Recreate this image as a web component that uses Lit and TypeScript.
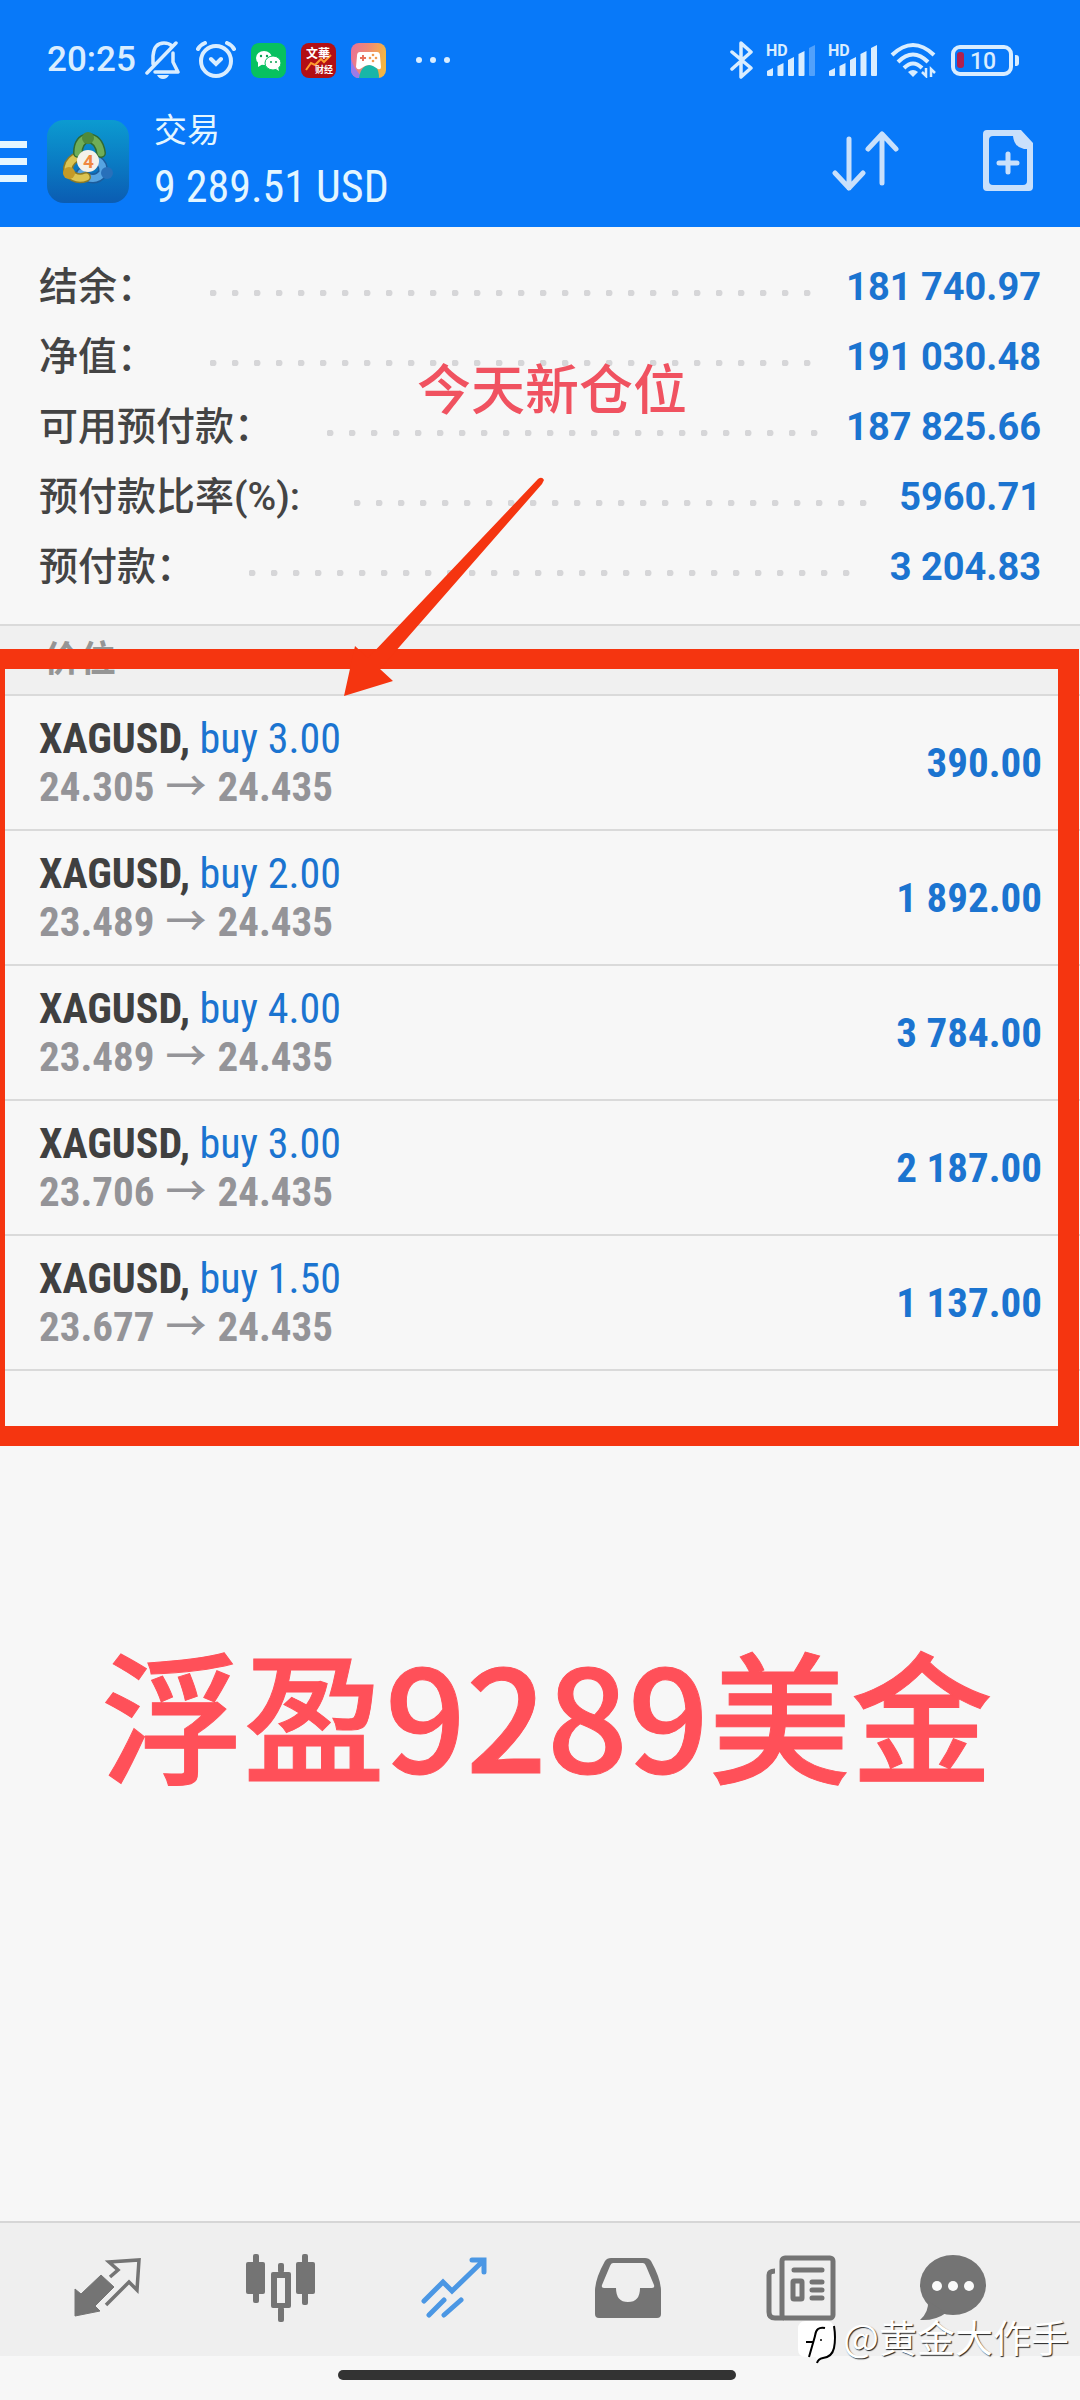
import { LitElement, html, css, svg, nothing } from 'lit';
import { customElement, property } from 'lit/decorators.js';

interface SummaryRow {
  label: string;
  value: string;
}

interface Position {
  symbol: string;
  side: string;
  open: string;
  current: string;
  profit: string;
}

const summary: SummaryRow[] = [
  { label: '结余：', value: '181 740.97' },
  { label: '净值：', value: '191 030.48' },
  { label: '可用预付款：', value: '187 825.66' },
  { label: '预付款比率(%):', value: '5960.71' },
  { label: '预付款：', value: '3 204.83' },
];

const positions: Position[] = [
  { symbol: 'XAGUSD', side: 'buy 3.00', open: '24.305', current: '24.435', profit: '390.00' },
  { symbol: 'XAGUSD', side: 'buy 2.00', open: '23.489', current: '24.435', profit: '1 892.00' },
  { symbol: 'XAGUSD', side: 'buy 4.00', open: '23.489', current: '24.435', profit: '3 784.00' },
  { symbol: 'XAGUSD', side: 'buy 3.00', open: '23.706', current: '24.435', profit: '2 187.00' },
  { symbol: 'XAGUSD', side: 'buy 1.50', open: '23.677', current: '24.435', profit: '1 137.00' },
];

const tabs = [
  {
    name: '行情',
    icon: html`<svg width="68" height="60" viewBox="0 0 68 60">
      <path d="M1 31 7 36 27 17 40 29 21 48 26 53 1 58z" fill="currentColor" stroke="currentColor" stroke-linejoin="round" />
      <path d="M36 19 44 12 35 4 65 2 63 32 55 24 32 47" fill="none" stroke="currentColor" stroke-width="3.5" />
    </svg>`,
  },
  {
    name: '图表',
    icon: html`<svg width="70" height="68" viewBox="0 0 70 68" fill="currentColor">
      <rect y="8" width="19" height="32" rx="2" />
      <rect x="7" width="6" height="49" rx="2" />
      <path fill-rule="evenodd" d="M27 18h16q2 0 2 2v32q0 2-2 2H27q-2 0-2-2V20q0-2 2-2zm4 6v25h8V24z" />
      <rect x="32" y="9" width="6" height="10" rx="2" />
      <rect x="32" y="53" width="6" height="15" rx="2" />
      <rect x="50" y="8" width="19" height="32" rx="2" />
      <rect x="56" width="6" height="51" rx="2" />
    </svg>`,
  },
  {
    name: '交易',
    active: true,
    icon: html`<svg width="67" height="61" viewBox="0 0 67 61" fill="none" stroke="currentColor" stroke-width="5" stroke-linecap="round">
      <path d="M3 44 22 25 31 34 62 4M51 3h12v12M8 58 23 43M23 58 40 43" />
    </svg>`,
  },
  {
    name: '历史',
    icon: html`<svg width="66" height="60" viewBox="0 0 66 60">
      <path
        fill="currentColor"
        fill-rule="evenodd"
        d="M10 3q2-3 6-3h34q4 0 6 3 10 18 10 30v23q0 4-4 4H4q-4 0-4-4V33Q0 21 10 3zM18 5q-2 0-3 3L7 27q-1 3 2 3h12q0 14 12 14t12-14h12q3 0 2-3L51 8q-1-3-3-3z"
      />
    </svg>`,
  },
  {
    name: '新闻',
    icon: html`<svg width="70" height="66" viewBox="0 0 70 66" fill="none" stroke="currentColor" stroke-width="5">
      <rect x="16" y="3" width="51" height="60" rx="3" />
      <path d="M9 16Q3 16 3 20V57Q3 63 9 63H18" />
      <path d="M28 15H56M46 27H56M46 35H56M46 43H56" stroke-linecap="round" />
      <rect x="27" y="26" width="9" height="18" rx="1" />
    </svg>`,
  },
  {
    name: '消息',
    icon: html`<svg width="66" height="66" viewBox="0 0 66 66">
      <ellipse cx="33" cy="30" rx="33" ry="30" fill="currentColor" />
      <path d="M8 46Q9 57 0 65 15 66 26 58z" fill="currentColor" />
      <g fill="#fafafa"><circle cx="17" cy="31" r="5" /><circle cx="33" cy="31" r="5" /><circle cx="49" cy="31" r="5" /></g>
    </svg>`,
  },
];

@customElement('signal-bars')
export class SignalBars extends LitElement {
  @property({ type: Number }) level = 5;

  static styles = css`
    :host {
      display: block;
    }

    svg {
      display: block;
    }

    text {
      font: 700 16px Roboto, sans-serif;
    }
  `;

  render() {
    const tops = [25, 20, 14, 8, 2];
    return html`
      <svg width="50" height="42" viewBox="0 -4 50 42" fill="#d9edff">
        <text x="0" y="13">HD</text>
        ${tops.map(
          (y, i) => svg`<path
            opacity=${i < this.level ? 1 : 0.35}
            d="M${1 + i * 10.5} ${y + 3}l6-3V32q0 1-1 1h-4q-1 0-1-1z"
          />`
        )}
      </svg>
    `;
  }
}

@customElement('status-bar')
export class StatusBar extends LitElement {
  static styles = css`
    :host {
      display: flex;
      align-items: center;
      justify-content: space-between;
      height: 40px;
      padding: 40px 60px 0 47px;
      color: #d9edff;
      font-family: Roboto, 'Noto Sans CJK SC', sans-serif;
    }

    .group {
      display: flex;
      align-items: center;
    }

    .left {
      gap: 15px;
    }

    .right {
      gap: 12px;
    }

    .clock {
      display: flex;
      align-items: center;
      gap: 9px;
      font-size: 35px;
      font-weight: 500;
      line-height: 40px;
    }

    .more {
      margin-left: 14px;
    }

    svg {
      display: block;
    }

    .tiny {
      font: 700 12px 'Noto Sans CJK SC', sans-serif;
    }

    .tiny.small {
      font-size: 9px;
    }

    .charge {
      font: 500 23px Roboto, sans-serif;
    }
  `;

  render() {
    return html`
      <div class="group left">
        <div class="clock">
          <span>20:25</span>
          <svg width="36" height="38" viewBox="0 0 36 38" fill="none" stroke="currentColor" stroke-width="3.5">
            <path d="M8 23V15Q9 2 19 2q5 0 8 3M2 32 31 2M28 12v9l5 10H10" stroke-linecap="round" stroke-linejoin="round" />
            <path d="M12 34h12q-2 4-6 4t-6-4z" fill="currentColor" stroke="none" />
          </svg>
        </div>
        <svg width="40" height="38" viewBox="0 0 40 38" fill="none" stroke="currentColor" stroke-width="4" stroke-linecap="round">
          <circle cx="20" cy="20" r="15" />
          <path d="M15 18l5 5 5-5M2 8q2-4 7-6M38 8q-2-4-7-6" />
        </svg>
        <svg width="35" height="35" viewBox="0 0 35 35">
          <rect width="35" height="35" rx="8" fill="#07c160" />
          <ellipse cx="13" cy="15" rx="8" ry="7" fill="#fff" />
          <path d="M7 19 7 24l5-3z" fill="#fff" />
          <ellipse cx="22" cy="20" rx="8" ry="7" fill="#fff" stroke="#07c160" />
          <path d="M25 26l3 2-1-4z" fill="#fff" />
          <g fill="#07a050"><circle cx="10" cy="13" r="1.2" /><circle cx="16" cy="13" r="1.2" /><circle cx="20" cy="19" r="1" /><circle cx="25" cy="19" r="1" /></g>
        </svg>
        <svg width="35" height="35" viewBox="0 0 35 35">
          <rect width="35" height="35" rx="8" fill="#b30f14" />
          <path d="M5 27l5-7 4 2 6-6 3 3 7-7" fill="none" stroke="#ff9a2e" stroke-width="2" />
          <text class="tiny" x="5" y="15" fill="#fff">文華</text>
          <text class="tiny small" x="14" y="30" fill="#fff">财经</text>
        </svg>
        <svg width="35" height="35" viewBox="0 0 35 35">
          <defs>
            <linearGradient id="game" x1="0" y1="0" x2="1" y2="0.2">
              <stop offset="0" stop-color="#e8709a" />
              <stop offset="0.5" stop-color="#ee8a74" />
              <stop offset="1" stop-color="#f3b544" />
            </linearGradient>
            <clipPath id="game-clip"><rect width="35" height="35" rx="8" /></clipPath>
          </defs>
          <g clip-path="url(#game-clip)">
            <rect width="35" height="35" fill="url(#game)" />
            <path d="M0 16q3 10 12 19H0z" fill="#9b7be8" />
            <path d="M8 35q2-13 11-13t9 13z" fill="#18b6a8" />
          </g>
          <path d="M9 9h17q3 0 3 4l1 11q0 3-3 2l-5-3q-4-2-8 0l-5 3q-3 1-4-2l1-11q0-4 3-4z" fill="#fff" />
          <path d="M12 12v6M9 15h6" stroke="#e8705c" stroke-width="2" />
          <g fill="#f09a50"><circle cx="22" cy="12" r="1.3" /><circle cx="22" cy="18" r="1.3" /><circle cx="19" cy="15" r="1.3" /><circle cx="25" cy="15" r="1.3" /></g>
        </svg>
        <svg class="more" width="36" height="8" viewBox="0 0 36 8" fill="currentColor">
          <circle cx="4" cy="4" r="3" /><circle cx="18" cy="4" r="3" /><circle cx="32" cy="4" r="3" />
        </svg>
      </div>
      <div class="group right">
        <svg width="24" height="38" viewBox="0 0 24 38" fill="none" stroke="currentColor" stroke-width="3.5" stroke-linejoin="round" stroke-linecap="round">
          <path d="M2 11 21 27 11 36V2L21 11 2 28" />
        </svg>
        <signal-bars level="4"></signal-bars>
        <signal-bars></signal-bars>
        <svg width="49" height="36" viewBox="0 0 49 36" fill="none" stroke="currentColor" stroke-width="4">
          <path d="M2 13q21-20 42 0M8 20q15-15 30 0M14 26q9-9 18 0" />
          <path d="M18 30q5-4 10 0l-5 5z" fill="currentColor" stroke="none" />
          <path d="M36 26v8l-4-4M41 35v-8l4 4" stroke-width="2.5" />
        </svg>
        <svg width="69" height="31" viewBox="0 0 69 31" fill="none">
          <rect x="2" y="2" width="58" height="27" rx="7" stroke="currentColor" stroke-width="4" />
          <rect x="6" y="7" width="7" height="16" rx="3" fill="#b02050" />
          <text class="charge" x="19" y="24" fill="currentColor">10</text>
          <path d="M64 10h1q3 0 3 3v5q0 3-3 3h-1z" fill="currentColor" />
        </svg>
      </div>
    `;
  }
}

@customElement('trade-header')
export class TradeHeader extends LitElement {
  static styles = css`
    :host {
      display: flex;
      align-items: center;
      height: 131px;
      padding: 16px 47px 0 0;
      color: #e4f6ff;
      font-family: Roboto, 'Noto Sans CJK SC', sans-serif;
    }

    button {
      display: block;
      padding: 0;
      border: 0;
      background: none;
      color: inherit;
    }

    svg {
      display: block;
    }

    .logo {
      margin: 0 25px 0 20px;
    }

    .titles {
      flex: 1;
      padding-bottom: 2px;
    }

    h1,
    p {
      margin: 0;
      font-weight: 400;
    }

    h1 {
      font-size: 33px;
      line-height: 52px;
    }

    p {
      font-family: 'Roboto Condensed', Roboto, sans-serif;
      font-size: 44px;
      line-height: 60px;
    }

    .actions {
      display: flex;
      align-items: center;
      gap: 84px;
      padding-bottom: 2px;
      color: #c9e0fb;
    }

    .four {
      font: 700 19px Roboto, sans-serif;
    }
  `;

  render() {
    return html`
      <button aria-label="菜单">
        <svg width="27" height="41" viewBox="0 0 27 41" fill="currentColor">
          <rect width="27" height="7" /><rect y="17" width="27" height="7" /><rect y="34" width="27" height="7" />
        </svg>
      </button>
      <svg class="logo" width="82" height="83" viewBox="0 0 82 83">
        <defs>
          <linearGradient id="tile" x1="0" y1="0" x2="0" y2="1">
            <stop offset="0" stop-color="#0c9bd0" />
            <stop offset="0.5" stop-color="#0a7cc4" />
            <stop offset="1" stop-color="#0b5cb2" />
          </linearGradient>
        </defs>
        <rect width="82" height="83" rx="17" fill="url(#tile)" />
        <g fill="none" stroke-linecap="round">
          <path d="M50 40q7 4 6 13-9 11-22 0" stroke="#1c5c9c" stroke-width="10" />
          <path d="M50 40q7 4 6 13-9 11-22 0" stroke="#56a4e2" stroke-width="7" />
          <path d="M28 38q-8 5-7 14 8 9 18 5" stroke="#8a7a28" stroke-width="10" />
          <path d="M28 38q-8 5-7 14 8 9 18 5" stroke="#dcc452" stroke-width="7" />
          <path d="M31 33q0-13 10-15 11 1 13 15" stroke="#2f6a34" stroke-width="10" />
          <path d="M31 33q0-13 10-15 11 1 13 15" stroke="#6fae58" stroke-width="7" />
        </g>
        <circle cx="41" cy="18" r="6" fill="#4f8a3c" />
        <circle cx="22" cy="53" r="6" fill="#c49a28" />
        <circle cx="60" cy="53" r="6" fill="#2870ba" />
        <circle cx="41" cy="41" r="11" fill="#f4f1ea" />
        <text class="four" x="36" y="48" fill="#ef8741">4</text>
      </svg>
      <div class="titles">
        <h1>交易</h1>
        <p>9 289.51 USD</p>
      </div>
      <div class="actions">
        <button aria-label="排序">
          <svg width="67" height="60" viewBox="0 0 67 60" fill="none" stroke="currentColor" stroke-width="5" stroke-linecap="round" stroke-linejoin="round">
            <path d="M17 8V57M3 42 17 57 31 42M50 52V3M36 18 50 3 64 18" />
          </svg>
        </button>
        <button aria-label="新订单">
          <svg width="50" height="61" viewBox="0 0 50 61">
            <path
              fill="currentColor"
              fill-rule="evenodd"
              d="M4 0H38L50 13V57q0 4-4 4H4q-4 0-4-4V4Q0 0 4 0zM10 6q-4 0-4 4V51q0 4 4 4H40q4 0 4-4V19H41Q31 17 30 6z"
            />
            <path d="M25 24V42M16 33H34" stroke="currentColor" stroke-width="5" stroke-linecap="round" />
          </svg>
        </button>
      </div>
    `;
  }
}

@customElement('account-summary')
export class AccountSummary extends LitElement {
  static styles = css`
    :host {
      display: block;
      padding: 25px 39px 22px 39px;
      font-family: Roboto, 'Noto Sans CJK SC', sans-serif;
      font-size: 39px;
      font-weight: 500;
      line-height: 70px;
    }

    dl {
      margin: 0;
    }

    .row {
      display: flex;
      height: 70px;
    }

    dt {
      color: #444;
    }

    dd {
      margin: 0;
      color: #1b74d0;
      font-size: 38px;
      font-weight: 700;
    }

    .dots {
      flex: 1;
      height: 6px;
      margin: 38px 27px 0 54px;
      background: radial-gradient(circle at 3px 3px, #d6d6d8 3px, transparent 4px) 0 0 / 22px 6px repeat-x;
    }
  `;

  render() {
    return html`
      <dl>
        ${summary.map(
          (row) => html`
            <div class="row">
              <dt>${row.label}</dt>
              <span class="dots"></span>
              <dd>${row.value}</dd>
            </div>
          `
        )}
      </dl>
    `;
  }
}

@customElement('position-list')
export class PositionList extends LitElement {
  static styles = css`
    :host {
      display: block;
      position: relative;
      border-top: 2px solid #dadada;
      font-family: 'Roboto Condensed', Roboto, sans-serif;
      font-size: 41px;
      font-weight: 700;
      line-height: 48px;
    }

    h2 {
      margin: 0;
      padding: 0 44px;
      border-bottom: 2px solid #dadada;
      background: #f0f0f0;
      color: #959595;
      font: 700 36px Roboto, 'Noto Sans CJK SC', sans-serif;
      line-height: 68px;
    }

    ul {
      margin: 0;
      padding: 0;
      list-style: none;
    }

    li {
      display: flex;
      align-items: center;
      justify-content: space-between;
      box-sizing: border-box;
      height: 135px;
      padding: 0 38px 0 39px;
      border-bottom: 2px solid #dadada;
    }

    .deal {
      color: #404040;
      font-size: 42px;
    }

    .side {
      color: #1b74d0;
      font-weight: 400;
    }

    .prices {
      color: #949498;
    }

    .arrow {
      margin: 0 11px;
      font-family: 'Noto Sans CJK SC', sans-serif;
      font-weight: 500;
      line-height: 0;
    }

    .profit {
      color: #1b74d0;
    }

    /* marker drawn round the open positions */
    .frame {
      position: absolute;
      inset: 23px 1px -75px 0;
      border: solid #f53510;
      border-width: 20px 21px 20px 5px;
    }
  `;

  render() {
    return html`
      <h2>价位</h2>
      <ul>
        ${positions.map(
          (p) => html`
            <li>
              <div>
                <div class="deal">${p.symbol}, <span class="side">${p.side}</span></div>
                <div class="prices">${p.open}<span class="arrow">→</span>${p.current}</div>
              </div>
              <span class="profit">${p.profit}</span>
            </li>
          `
        )}
      </ul>
      <div class="frame"></div>
    `;
  }
}

@customElement('tab-bar')
export class TabBar extends LitElement {
  static styles = css`
    :host {
      display: block;
      position: relative;
    }

    nav {
      display: flex;
      align-items: center;
      height: 133px;
      padding: 0 62px 0 21px;
      border-top: 2px solid #d6d6d6;
      background: #efefef;
    }

    button {
      display: flex;
      flex: 4;
      justify-content: center;
      padding: 0 0 4px;
      border: 0;
      background: none;
      color: #747474;
    }

    button:last-child {
      flex: 3;
    }

    button[aria-current] {
      color: #4b97e4;
    }

    .home {
      display: flex;
      justify-content: center;
      height: 30px;
      padding: 14px 6px 0 0;
    }

    .pill {
      width: 37%;
      height: 10px;
      border-radius: 5px;
      background: #333;
    }

    .watermark {
      position: absolute;
      right: 11px;
      bottom: 34px;
      display: flex;
      align-items: flex-start;
      gap: 5px;
      color: #fff;
      font: 400 38px 'Noto Sans CJK SC', sans-serif;
      line-height: 32px;
      text-shadow: 1px 1px 1px #222;
    }
  `;

  render() {
    return html`
      <nav>
        ${tabs.map(
          (tab) => html`<button aria-label=${tab.name} aria-current=${tab.active ? 'page' : nothing}>${tab.icon}</button>`
        )}
      </nav>
      <div class="home"><div class="pill"></div></div>
      <div class="watermark">
        <svg width="40" height="46" viewBox="0 0 40 46" fill="none">
          <path d="M8 1H28Q36 1 36 9V28Q36 36 28 37 21 38 19 43L18 37H8Q0 37 0 29V9Q0 1 8 1z" fill="#fff" />
          <path d="M27 8Q18 6 17 16L11 37M8 22h7M36 6q2 12 0 22-2 9-11 10-5 1-6 5" stroke="#000" stroke-width="2" />
          <circle cx="23" cy="20" r="1" fill="#000" />
        </svg>
        <span>@黄金大作手</span>
      </div>
    `;
  }
}

@customElement('app-root')
export class AppRoot extends LitElement {
  static styles = css`
    :host {
      display: flex;
      flex-direction: column;
      position: relative;
      min-height: 100vh;
      overflow: hidden;
      background: #f7f7f7;
      font-family: 'Noto Sans CJK SC', sans-serif;
    }

    header {
      background: #0879f9;
    }

    main {
      flex: 1;
    }

    .note,
    .pointer {
      position: absolute;
    }

    .note {
      top: 355px;
      left: 417px;
      color: #f05260;
      font-size: 54px;
      font-weight: 500;
      line-height: 64px;
    }

    .pointer {
      top: 476px;
      left: 342px;
    }

    .caption {
      margin: 240px 0 0;
      padding-left: 14px;
      color: #ff5059;
      font-size: 142px;
      font-weight: 500;
      line-height: 200px;
      text-align: center;
      -webkit-text-stroke: 1px #ff5059;
    }
  `;

  render() {
    return html`
      <header>
        <status-bar></status-bar>
        <trade-header></trade-header>
      </header>
      <main>
        <account-summary></account-summary>
        <position-list></position-list>
        <p class="caption">浮盈9289美金</p>
      </main>
      <tab-bar></tab-bar>
      <div class="note">今天新仓位</div>
      <svg class="pointer" width="204" height="224" viewBox="0 0 204 224">
        <path d="M2 220 13 170 26 182 196 3Q200 0 202 4L200 8 38 193 51 205z" fill="#f53510" />
      </svg>
    `;
  }
}
